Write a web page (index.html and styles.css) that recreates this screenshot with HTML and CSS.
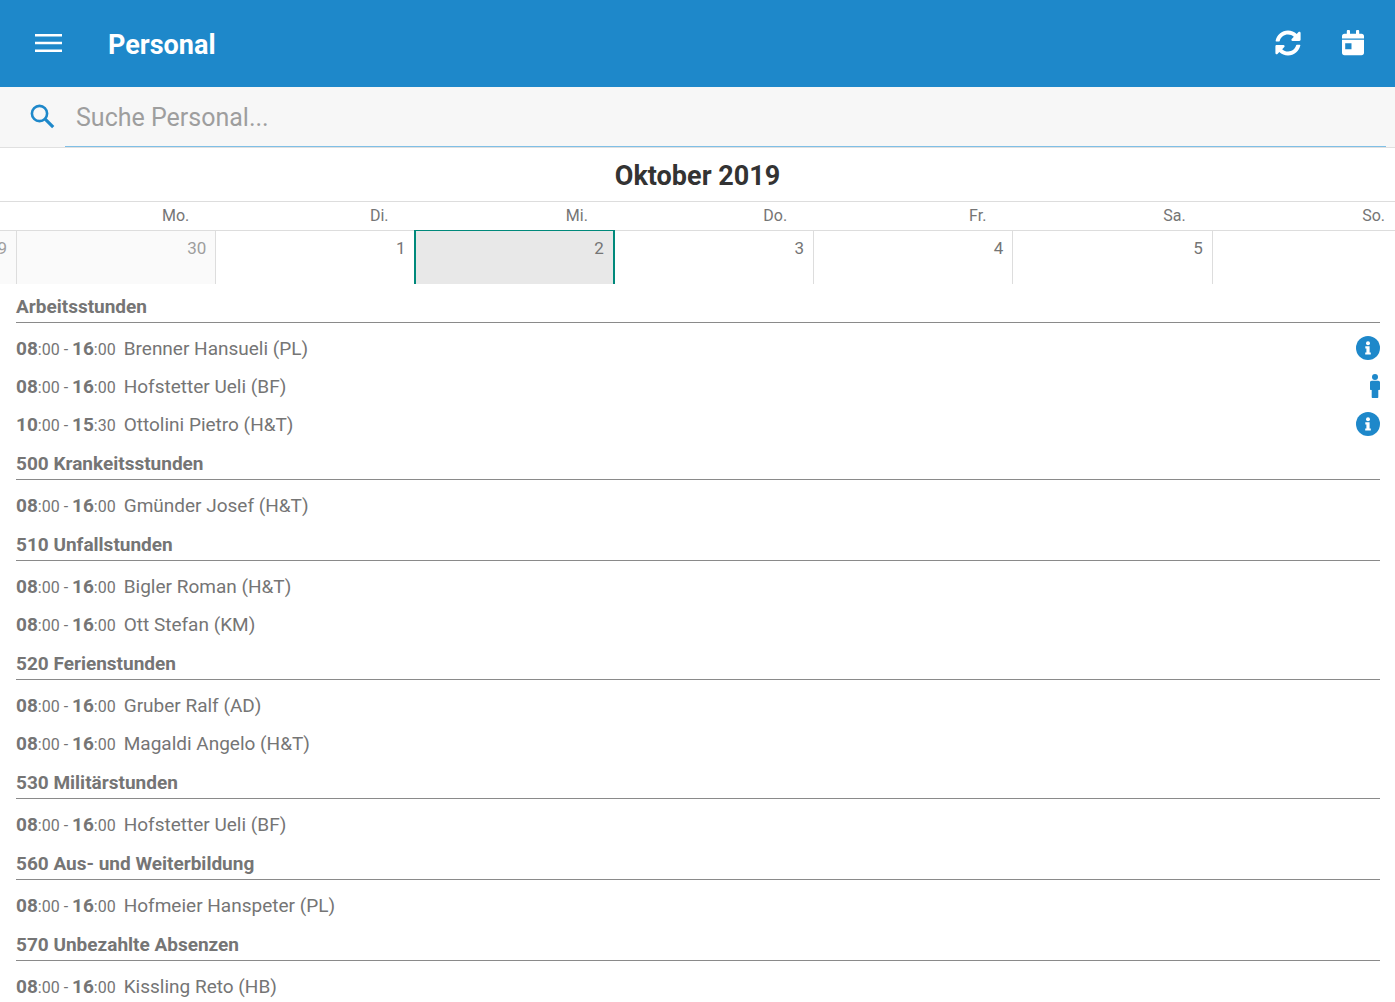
FILE: index.html
```html
<!DOCTYPE html>
<html lang="de">
<head>
<meta charset="utf-8">
<meta name="viewport" content="width=device-width, initial-scale=1">
<title>Personal</title>
<link rel="stylesheet" href="styles.css">
</head>
<body>
<svg class="sprite" aria-hidden="true">
  <symbol id="info" viewBox="0 0 24 24">
    <circle cx="12" cy="12" r="12" fill="currentColor"/>
    <circle cx="12" cy="7.2" r="2" fill="#fff"/>
    <path fill="#fff" d="M9.3 10.2h4.3v6.2h1.2v2.2H9.2v-2.2h1.2v-4H9.3z"/>
  </symbol>
  <symbol id="person" viewBox="0 0 10 24">
    <circle cx="5" cy="3" r="3" fill="currentColor"/>
    <path fill="currentColor" d="M1.8 6.7h6.4C9.300 6.700 10 7.400 10 8.500V15c0 .7-.4 1.100-1 1.100H8.300V23c0 .6-.4 1-1 1H2.700c-.6 0-1-.4-1-1v-6.900H1c-.6 0-1-.4-1-1.100V8.500C0 7.400.7 6.700 1.800 6.700z"/>
  </symbol>
</svg>

<header class="toolbar">
  <button class="icon-button" type="button" aria-label="Menü">
    <svg width="28" height="20" viewBox="0 0 28 20"><path d="M1 2.200h27M1 10h27M1 17.700h27" stroke="currentColor" stroke-width="2.400"/></svg>
  </button>
  <h1 class="toolbar-title">Personal</h1>
  <div class="toolbar-actions">
    <button class="icon-button" type="button" aria-label="Aktualisieren">
      <svg width="26" height="26" viewBox="0 0 512 512"><path fill="currentColor" d="M370.720 133.280C339.458 104.008 298.888 87.962 255.848 88c-77.458.068-144.328 53.178-162.791 126.850-1.344 5.363-6.122 9.150-11.651 9.150H24.103c-7.498 0-13.194-6.807-11.807-14.176C33.933 94.924 134.813 8 256 8c66.448 0 126.791 26.136 171.315 68.685L463.030 40.970C478.149 25.851 504 36.559 504 57.941V192c0 13.255-10.745 24-24 24H345.941c-21.382 0-32.090-25.851-16.971-40.971l41.750-41.749zM32 296h134.059c21.382 0 32.090 25.851 16.971 40.971l-41.750 41.750c31.262 29.273 71.835 45.319 114.876 45.280 77.418-.070 144.315-53.144 162.787-126.849 1.344-5.363 6.122-9.150 11.651-9.150h57.304c7.498 0 13.194 6.807 11.807 14.176C478.067 417.076 377.187 504 256 504c-66.448 0-126.791-26.136-171.315-68.685L48.970 471.030C33.851 486.149 8 475.441 8 454.059V320c0-13.255 10.745-24 24-24z"/></svg>
    </button>
    <button class="icon-button" type="button" aria-label="Heute">
      <svg width="22" height="26" viewBox="0 0 22 26"><path fill="currentColor" d="M0 8.500V6.200C0 4.600.9 3.700 2.500 3.700H4.800V1.200C4.800.5 5.200 0 6 0h.8C7.500 0 8 .5 8 1.200v2.500h6V1.200C14 .5 14.500 0 15.200 0h.8c.8 0 1.200.5 1.200 1.200v2.500h2.300c1.600 0 2.500.9 2.500 2.500v2.300z"/><path fill="currentColor" fill-rule="evenodd" d="M0 9.800h22v13c0 1.600-.9 2.500-2.500 2.500h-17C.9 25.300 0 24.400 0 22.800zM3.200 13.200v6h6.300v-6z"/></svg>
    </button>
  </div>
</header>

<form class="search" role="search">
  <label class="search-icon" for="q" aria-label="Suche">
    <svg width="26" height="26" viewBox="0 0 26 26" fill="none" stroke="currentColor"><circle cx="9.500" cy="9.500" r="7.600" stroke-width="2.600"/><path d="M15.200 15.200l8 8" stroke-width="3.200"/></svg>
  </label>
  <input class="search-input" id="q" type="text" placeholder="Suche Personal...">
</form>

<section class="calendar" aria-label="Kalender">
  <h2 class="month">Oktober 2019</h2>
  <div class="weekdays">
    <span>Mo.</span><span>Di.</span><span>Mi.</span><span>Do.</span><span>Fr.</span><span>Sa.</span><span>So.</span>
  </div>
  <div class="days">
    <button class="day day-other" type="button">29</button>
    <button class="day day-other" type="button">30</button>
    <button class="day" type="button">1</button>
    <button class="day day-selected" type="button">2</button>
    <button class="day" type="button">3</button>
    <button class="day" type="button">4</button>
    <button class="day" type="button">5</button>
    <button class="day" type="button" aria-label="6"></button>
  </div>
</section>

<main class="groups">
  <section>
    <h3 class="group-title">Arbeitsstunden</h3>
    <ul class="entries">
      <li class="entry"><span class="time"><b>08</b>:00 - <b>16</b>:00</span><span class="name">Brenner Hansueli (PL)</span><svg class="mark" width="24" height="24"><use href="#info"/></svg></li>
      <li class="entry"><span class="time"><b>08</b>:00 - <b>16</b>:00</span><span class="name">Hofstetter Ueli (BF)</span><svg class="mark" width="10" height="24"><use href="#person"/></svg></li>
      <li class="entry"><span class="time"><b>10</b>:00 - <b>15</b>:30</span><span class="name">Ottolini Pietro (H&amp;T)</span><svg class="mark" width="24" height="24"><use href="#info"/></svg></li>
    </ul>
  </section>
  <section>
    <h3 class="group-title">500 Krankeitsstunden</h3>
    <ul class="entries">
      <li class="entry"><span class="time"><b>08</b>:00 - <b>16</b>:00</span><span class="name">Gmünder Josef (H&amp;T)</span></li>
    </ul>
  </section>
  <section>
    <h3 class="group-title">510 Unfallstunden</h3>
    <ul class="entries">
      <li class="entry"><span class="time"><b>08</b>:00 - <b>16</b>:00</span><span class="name">Bigler Roman (H&amp;T)</span></li>
      <li class="entry"><span class="time"><b>08</b>:00 - <b>16</b>:00</span><span class="name">Ott Stefan (KM)</span></li>
    </ul>
  </section>
  <section>
    <h3 class="group-title">520 Ferienstunden</h3>
    <ul class="entries">
      <li class="entry"><span class="time"><b>08</b>:00 - <b>16</b>:00</span><span class="name">Gruber Ralf (AD)</span></li>
      <li class="entry"><span class="time"><b>08</b>:00 - <b>16</b>:00</span><span class="name">Magaldi Angelo (H&amp;T)</span></li>
    </ul>
  </section>
  <section>
    <h3 class="group-title">530 Militärstunden</h3>
    <ul class="entries">
      <li class="entry"><span class="time"><b>08</b>:00 - <b>16</b>:00</span><span class="name">Hofstetter Ueli (BF)</span></li>
    </ul>
  </section>
  <section>
    <h3 class="group-title">560 Aus- und Weiterbildung</h3>
    <ul class="entries">
      <li class="entry"><span class="time"><b>08</b>:00 - <b>16</b>:00</span><span class="name">Hofmeier Hanspeter (PL)</span></li>
    </ul>
  </section>
  <section>
    <h3 class="group-title">570 Unbezahlte Absenzen</h3>
    <ul class="entries">
      <li class="entry"><span class="time"><b>08</b>:00 - <b>16</b>:00</span><span class="name">Kissling Reto (HB)</span></li>
    </ul>
  </section>
</main>
</body>
</html>
```
FILE: styles.css
```css
* { box-sizing: border-box; }

body {
  margin: 0;
  background: #fff;
  color: #757575;
  font-family: Roboto, "Liberation Sans", sans-serif;
  font-size: 20px;
}

h1, h2, h3, ul { margin: 0; padding: 0; }
ul { list-style: none; }
svg { display: block; }
.sprite { display: none; }

button {
  margin: 0;
  padding: 0;
  border: 0;
  background: none;
  color: inherit;
  font: inherit;
}

.toolbar {
  display: flex;
  align-items: center;
  height: 87px;
  padding: 0 31px 2px 34px;
  background: #1e88ca;
  color: #fff;
}
.toolbar-title {
  margin-left: 46px;
  padding-top: 4px;
  font-size: 27px;
  font-weight: 700;
  line-height: 32px;
}
.toolbar-actions {
  display: flex;
  align-items: center;
  gap: 41px;
  margin-left: auto;
}

.search {
  display: flex;
  align-items: center;
  height: 61px;
  padding: 0 9px 0 30px;
  border-bottom: 1px solid #e0e0e0;
  background: #f7f7f7;
}
.search-icon { width: 35px; color: #1e88ca; }
.search-input {
  flex: 1;
  min-width: 0;
  height: 60px;
  padding: 2px 11px 0;
  border: 0;
  border-bottom: 1px solid #7fbfe6;
  outline: 0;
  background: none;
  color: #333;
  font: inherit;
  font-size: 25px;
}
.search-input::placeholder { color: #9e9e9e; opacity: 1; }

.month {
  padding: 12px 0 9px;
  border-bottom: 1px solid #ddd;
  color: #333;
  font-size: 27px;
  font-weight: 700;
  line-height: 32px;
  text-align: center;
}
.weekdays {
  display: grid;
  grid-template-columns: repeat(7, 1fr);
  border-bottom: 1px solid #ddd;
  font-size: 16px;
  line-height: 28px;
  text-align: right;
}
.weekdays span { padding-right: 10px; }

.days {
  display: grid;
  grid-template-columns: 17px repeat(7, calc(100% / 7));
  height: 53px;
  overflow-x: clip;
}
.day {
  display: flex;
  justify-content: flex-end;
  padding: 7px 9px 0 0;
  border-right: 1px solid #ddd;
  font-size: 17px;
  line-height: 20px;
}
.day-other { background: #fafafa; color: #9e9e9e; }
.day-selected {
  margin: -1px 0 0 -2px;
  border: 2px solid #00897b;
  border-top-width: 1px;
  border-bottom: 0;
  background: #e8e8e8;
}

.groups { padding: 1px 15px 0 16px; }
.group-title {
  padding: 10px 0 4px;
  border-bottom: 1px solid #8a8a8a;
  font-size: 19px;
  font-weight: 700;
  line-height: 23px;
}
.entries { padding: 5px 0 0; }
.entry {
  display: flex;
  align-items: center;
  gap: 8px;
  height: 38px;
  padding-top: 2px;
}
.time { font-size: 16px; }
.time b { font-size: 19px; font-weight: 700; }
.name { font-size: 19px; }
.mark { margin-left: auto; color: #1e88ca; }
```
